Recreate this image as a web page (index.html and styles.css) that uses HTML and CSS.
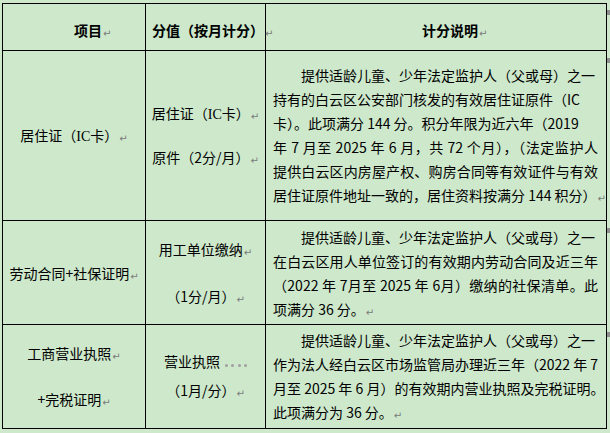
FILE: index.html
```html
<!DOCTYPE html>
<html lang="zh-CN">
<head>
<meta charset="utf-8">
<title>积分说明</title>
<link rel="stylesheet" href="styles.css">
</head>
<body>
<div class="page">
  <div class="sheet">
    <div class="cell head c1"><p>项目<i class="pm">↵</i></p></div>
    <div class="cell head c2"><p>分值（按月计分）<i class="pm">↵</i></p></div>
    <div class="cell head c3"><p>计分说明<i class="pm">↵</i></p></div>
    <div class="mark"><span class="mk"></span></div>

    <div class="cell c1 r1"><p>居住证（<span class="lat">IC</span>卡）<i class="pm">↵</i></p></div>
    <div class="cell c2 r1 gap16">
      <p>居住证（<span class="lat">IC</span>卡）<i class="pm">↵</i></p>
      <p>原件（2分/月）<i class="pm">↵</i></p>
    </div>
    <div class="cell c3 desc r1">
      <p>
        <span class="ln ind">提供适龄儿童、少年法定监护人（父或母）之一</span>
        <span class="ln">持有的白云区公安部门核发的有效居住证原件（IC</span>
        <span class="ln">卡）。此项满分 144 分。积分年限为近六年（2019</span>
        <span class="ln j">年 7 月至 2025 年 6 月，共 72 个月），（法定监护人</span>
        <span class="ln j">提供白云区内房屋产权、购房合同等有效证件与有效</span>
        <span class="ln">居住证原件地址一致的，居住资料按满分 144 积分）<i class="pm">↵</i></span>
      </p>
    </div>
    <div class="mark"><span class="mk"></span></div>

    <div class="cell c1 r2"><p>劳动合同+社保证明<i class="pm">↵</i></p></div>
    <div class="cell c2 r2 gap19">
      <p>用工单位缴纳<i class="pm">↵</i></p>
      <p>（1分/月）<i class="pm">↵</i></p>
    </div>
    <div class="cell c3 desc r2">
      <p>
        <span class="ln ind">提供适龄儿童、少年法定监护人（父或母）之一</span>
        <span class="ln j">在白云区用人单位签订的有效期内劳动合同及近三年</span>
        <span class="ln j">（2022 年 7月至 2025 年 6月）缴纳的社保清单。此</span>
        <span class="ln">项满分 36 分。<i class="pm">↵</i></span>
      </p>
    </div>
    <div class="mark"><span class="mk"></span></div>

    <div class="cell c1 r3 gap18">
      <p>工商营业执照<i class="pm">↵</i></p>
      <p>+完税证明<i class="pm">↵</i></p>
    </div>
    <div class="cell c2 r3 gap2">
      <p>营业执照<span class="dots"><b></b><b></b><b></b><b></b></span></p>
      <p>（1月/分）<i class="pm">↵</i></p>
    </div>
    <div class="cell c3 desc r3">
      <p>
        <span class="ln ind">提供适龄儿童、少年法定监护人（父或母）之一</span>
        <span class="ln j">作为法人经白云区市场监管局办理近三年（2022 年 7</span>
        <span class="ln j">月至 2025 年 6 月）的有效期内营业执照及完税证明。</span>
        <span class="ln">此项满分为 36 分。<i class="pm">↵</i></span>
      </p>
    </div>
    <div class="mark"><span class="mk"></span></div>
  </div>
</div>
</body>
</html>
```

FILE: styles.css
```css
html, body {
  margin: 0;
  background: #cde8cb;
}

body {
  font-family: "Noto Sans CJK SC", "Noto Sans", sans-serif;
  font-size: 14px;
  line-height: 24px;
  color: #000;
}

.page {
  padding: 3px 0 0 2px;
}

.sheet {
  display: grid;
  grid-template-columns: 144px 120px 341px 3px;
  grid-template-rows: 48px 170px 104px 104px;
}

.cell {
  box-sizing: border-box;
  border-right: 1px solid #000;
  border-bottom: 1px solid #000;
  display: flex;
  flex-direction: column;
  justify-content: center;
  align-items: center;
  padding-top: 2px;
  min-width: 0;
}

.c1 {
  border-left: 1px solid #000;
}

.r2 {
  padding-top: 4px;
}

.head {
  border-top: 1px solid #000;
  font-weight: 700;
  align-items: flex-start;
  padding-top: 9px;
}

.head.c1 { padding-left: 71px; }
.head.c2 { padding-left: 6px; }
.head.c3 { padding-left: 156px; }

p {
  margin: 0;
  white-space: nowrap;
  text-align: center;
}

.gap16 { gap: 16px; }
.gap19 { gap: 19px; }
.gap18 { gap: 18px; }
.gap2 { gap: 2px; }

.lat {
  font-family: "Liberation Serif", serif;
}

.pm {
  font-style: normal;
  font-weight: 400;
  font-family: "DejaVu Sans", sans-serif;
  font-size: 10px;
  color: #7a7a7a;
  margin-left: 1px;
  vertical-align: -1px;
}

.dots {
  display: inline-block;
  margin-left: 1px;
  vertical-align: middle;
}

.dots b {
  display: inline-block;
  width: 3px;
  height: 3px;
  border-radius: 50%;
  background: #a0a0a0;
  margin-left: 3.5px;
  vertical-align: middle;
}

.desc {
  align-items: stretch;
  padding-left: 7px;
  padding-right: 8px;
}

.desc p {
  text-align: left;
}

.ln {
  display: block;
  white-space: nowrap;
}

.ind {
  text-indent: 2em;
}

.j {
  text-align: justify;
  text-align-last: justify;
}

.mark {
  overflow: hidden;
  padding-top: 7px;
}

.mk {
  display: block;
  width: 3px;
  height: 5px;
  background: #8f8f8f;
}
```
